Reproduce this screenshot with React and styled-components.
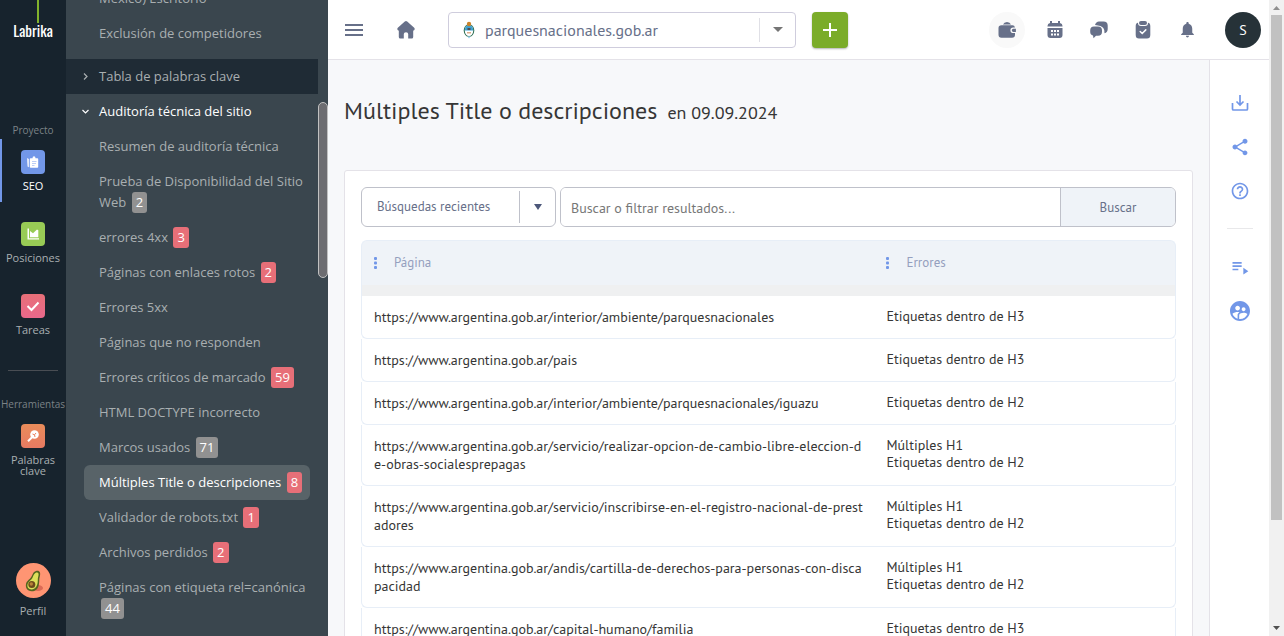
import React from 'react'
import styled, { createGlobalStyle } from 'styled-components'
import {
  MdHelpOutline,
  MdNotifications,
  MdPlaylistPlay,
  MdShare,
  MdSupervisedUserCircle,
} from 'react-icons/md'

const theme = {
  colors: {
    rail: '#17232d',
    sidebar: '#3a464e',
    sidebarDark: '#1f2b35',
    muted: '#a9afb1',
    slate: '#677089',
    blue: '#7297e8',
    red: '#e76f78',
    grey: '#919191',
    line: '#e4e2e8',
    rowLine: '#e7eef7',
    pale: '#eff3f8',
    text: '#363636',
  },
  fonts: {
    side: '"Open Sans", sans-serif',
    main: '"PT Sans", "Noto Sans", sans-serif',
    logo: 'Oswald, "Liberation Sans Narrow", "Liberation Sans", sans-serif',
  },
}

const GlobalStyle = createGlobalStyle`
  *, *:before { box-sizing: border-box; }
  body {
    margin: 0;
    color: ${theme.colors.text};
    font-family: ${theme.fonts.main};
    font-size: 14px;
  }
  a { color: inherit; text-decoration: none; }
  button, input, select { font: inherit; color: inherit; }
`

const Page = styled.div`
  display: grid;
  grid-template-columns: 66px 262px minmax(0, 1fr) 15px;
  height: 100vh;
  overflow: hidden;
`

/* Project rail */

const Rail = styled.nav`
  background: ${theme.colors.rail};
  color: ${theme.colors.muted};
  display: flex;
  flex-direction: column;
  font-family: ${theme.fonts.side};
  min-height: 0;
  padding-bottom: 20px;
`

const Logo = styled.a`
  align-items: center;
  color: #fff;
  display: flex;
  flex-direction: column;
  font-family: ${theme.fonts.logo};
  font-size: 15px;
  height: 122px;
  line-height: 14px;
  &:before {
    background: #82b32c;
    content: '';
    height: 23px;
    margin-left: 10px;
    width: 2px;
  }
`

const RailHeading = styled.div`
  color: #7b8286;
  font-size: 10px;
  line-height: 16px;
  margin-bottom: 1px;
  text-align: center;
`

const RailLink = styled.a`
  align-items: center;
  border-left: 2px solid ${props => props.$active ? theme.colors.blue : 'transparent'};
  color: ${props => props.$active ? '#fff' : 'inherit'};
  display: flex;
  flex-direction: column;
  font-size: 11px;
  gap: 6px;
  line-height: 11px;
  margin-bottom: 9px;
  padding: 11px 2px 11px 0;
  text-align: center;
`

const Tile = styled.span`
  align-items: center;
  background: ${props => props.$fill};
  border-radius: 4px;
  display: flex;
  height: 24px;
  justify-content: center;
  width: 24px;
`

const RailDivider = styled.hr`
  border: 0;
  border-top: 1px solid #494d53;
  margin: 15px 8px 25px;
  width: 50px;
`

const Profile = styled.a`
  align-items: center;
  display: flex;
  flex-direction: column;
  font-size: 11px;
  gap: 7px;
  line-height: 11px;
  margin-top: auto;
`

/* Section sidebar */

const Sidebar = styled.aside`
  background: ${theme.colors.sidebar};
  color: ${theme.colors.muted};
  display: grid;
  font-family: ${theme.fonts.side};
  font-size: 13px;
  grid-template-columns: minmax(0, 1fr) 10px;
  line-height: 21px;
  min-height: 0;
  overflow: hidden;
`

const SideList = styled.ul`
  list-style: none;
  margin: -19px 0 0;
  padding: 0;
`

const SideLink = styled.a`
  background: ${props => props.$active ? '#586368' : 'none'};
  border-radius: 6px;
  color: ${props => props.$active ? '#fff' : 'inherit'};
  display: block;
  margin: 0 8px 0 18px;
  padding: 7px 0 7px 15px;
  &:hover { color: #fff; }
`

const Group = styled.button`
  align-items: center;
  background: ${props => props.$open ? 'none' : theme.colors.sidebarDark};
  border: 0;
  color: ${props => props.$open ? '#fff' : 'inherit'};
  display: flex;
  gap: 9px;
  line-height: 21px;
  margin-top: ${props => props.$open ? '0' : '8px'};
  padding: 7px 15px;
  text-align: left;
  width: 100%;
`

const Badge = styled.span`
  background: ${props => props.$warn ? theme.colors.red : theme.colors.grey};
  border-radius: 3px;
  color: #fff;
  display: inline-block;
  margin-left: 2px;
  padding: 0 4px;
`

const SideScroll = styled.div`
  background: ${theme.colors.sidebar};
  padding-top: 102px;
  &:before {
    background: #6d6d71;
    border: 1px solid #c1c1c1;
    border-radius: 5px;
    content: '';
    display: block;
    height: 176px;
  }
`

/* Top bar */

const Main = styled.div`
  display: flex;
  flex-direction: column;
  min-height: 0;
  min-width: 0;
`

const TopBar = styled.header`
  align-items: center;
  background: #fff;
  border-bottom: 1px solid ${theme.colors.line};
  color: ${theme.colors.slate};
  display: flex;
  flex: none;
  height: 60px;
  padding: 0 8px;
`

const IconButton = styled.button`
  align-items: center;
  background: none;
  border: 0;
  color: inherit;
  display: flex;
  height: 36px;
  justify-content: center;
  padding: 0;
  width: ${props => props.$width || 44}px;
`

const WalletButton = styled(IconButton)`
  background: #f9f9f9;
  border-radius: 50%;
  margin: 0 8px 0 auto;
`

const DomainBox = styled.label`
  align-items: center;
  border: 1px solid #cfcddd;
  border-radius: 4px;
  display: flex;
  font-size: 16px;
  gap: 10px;
  height: 36px;
  margin: 0 16px 0 8px;
  padding-left: 14px;
  width: 348px;
`

const BareSelect = styled.select`
  appearance: none;
  background: none;
  border: 0;
  flex: 1;
  line-height: 24px;
  min-width: 0;
  outline: 0;
  padding: 0;
`

const Caret = styled.span`
  align-items: center;
  border-left: 1px solid ${props => props.$line};
  display: flex;
  height: ${props => props.$height}px;
  justify-content: center;
  width: 36px;
`

const AddButton = styled.button`
  align-items: center;
  background: #7bac29;
  border: 0;
  border-radius: 4px;
  box-shadow: 0 1px 2px rgba(0, 0, 0, 0.3);
  display: flex;
  height: 36px;
  justify-content: center;
  padding: 0;
  width: 36px;
`

const Avatar = styled.button`
  background: #263238;
  border: 0;
  border-radius: 50%;
  color: #fff;
  height: 36px;
  margin-left: 16px;
  padding: 0;
  width: 36px;
`

/* Content */

const Body = styled.div`
  display: grid;
  flex: 1;
  grid-template-columns: minmax(0, 1fr) 60px;
  min-height: 0;
`

const Content = styled.main`
  background: #f7f8fa;
  overflow: hidden;
  padding: 35px 16px 0;
`

const Title = styled.h1`
  font-size: 24px;
  font-weight: normal;
  line-height: 32px;
  margin: 0 0 43px;
  small {
    font-size: 18px;
    line-height: 18px;
    margin-left: 10px;
  }
`

const Panel = styled.section`
  background: #fff;
  border: 1px solid ${theme.colors.line};
  border-radius: 3px;
  padding: 16px;
`

const SearchRow = styled.form`
  color: ${theme.colors.slate};
  display: flex;
  font-size: 13px;
  gap: 4px;
  margin-bottom: 13px;
`

const RecentBox = styled.label`
  align-items: center;
  border: 1px solid #bfc1ca;
  border-radius: 6px;
  display: flex;
  height: 40px;
  padding-left: 15px;
  width: 195px;
`

const SearchBox = styled.div`
  border: 1px solid #bfc1ca;
  border-radius: 6px;
  display: flex;
  flex: 1;
  height: 40px;
  overflow: hidden;
  input {
    border: 0;
    flex: 1;
    font-size: 14px;
    min-width: 0;
    outline: 0;
    padding: 2px 10px 0;
  }
  input::placeholder { color: #777; }
  button {
    background: ${theme.colors.pale};
    border: 0;
    border-left: 1px solid #bfc1ca;
    width: 115px;
  }
`

const Table = styled.table`
  border-collapse: separate;
  border-spacing: 0;
  table-layout: fixed;
  width: 100%;
`

const HeadCell = styled.th`
  background: ${theme.colors.pale};
  border: 1px solid ${theme.colors.rowLine};
  border-width: 1px 0 0;
  box-shadow: inset 0 -11px #eff0f1;
  color: #959fbe;
  font-size: 13px;
  font-weight: normal;
  height: 56px;
  padding: 0 12px 12px;
  text-align: left;
  &:first-child {
    border-left-width: 1px;
    border-top-left-radius: 6px;
    width: 63%;
  }
  &:last-child {
    border-right-width: 1px;
    border-top-right-radius: 6px;
  }
`

const HeadLabel = styled.div`
  align-items: center;
  display: flex;
  gap: 17px;
`

const Cell = styled.td`
  border: 0 solid ${theme.colors.rowLine};
  border-bottom-width: 1px;
  line-height: 17px;
  padding: 12px;
  vertical-align: top;
  &:first-child {
    border-bottom-left-radius: 6px;
    border-left-width: 1px;
    line-height: 18px;
    padding-right: 10px;
    word-break: break-all;
  }
  &:last-child {
    border-bottom-right-radius: 6px;
    border-right-width: 1px;
  }
`

const Tools = styled.aside`
  align-items: center;
  background: #fff;
  border-left: 1px solid ${theme.colors.line};
  color: ${theme.colors.blue};
  display: flex;
  flex-direction: column;
  gap: 8px;
  padding-top: 25px;
  hr {
    border: 0;
    border-top: 1px solid #e8e8ea;
    margin: 11px 0 12px;
    width: 26px;
  }
`

const PageScroll = styled.div`
  align-items: center;
  background: #f1f1f1;
  display: flex;
  flex-direction: column;
  justify-content: space-between;
  padding: 6px 0;
`

const PageThumb = styled.div`
  background: #c1c1c1;
  flex: 0 0 auto;
  height: 81%;
  margin: 5px 0 auto;
  width: 11px;
`

/* Drawings */

const Icon = ({ size = 20, children }) => (
  <svg width={size} height={size} viewBox="0 0 20 20" fill="currentColor" aria-hidden="true">
    {children}
  </svg>
)

const Triangle = ({ width, height, fill, up }) => (
  <svg width={width} height={height} viewBox="0 0 10 6" preserveAspectRatio="none" aria-hidden="true">
    <path d={up ? 'M0 6h10L5 0z' : 'M0 0h10L5 6z'} fill={fill} />
  </svg>
)

const MenuIcon = () => (
  <Icon><path d="M1 4h18v2H1zM1 9h18v2H1zM1 14h18v2H1z" /></Icon>
)

const HomeIcon = () => (
  <Icon>
    <path d="M8.800 1.500Q10 .4 11.200 1.500l7 6.200q.9.900.3 2l-.6.900h-.7V17q0 1.500-1.500 1.500h-3.500V14q0-1.700-2.200-1.700T7.800 14v4.500H4.300Q2.800 18.500 2.800 17v-6.400h-.7l-.6-.9q-.6-1.100.3-2z" />
  </Icon>
)

const WalletIcon = () => (
  <Icon>
    <path d="M6 4.500Q7 2 10 2t4 2.500zM4.500 5.200h11q2 0 2.500 2.300h-1.800a2.800 2.800 0 0 0 0 5.600H18v1.700q0 3-3 3H4.500q-3 0-3-3V8q0-2.800 3-2.800z" />
    <path d="M16.400 8.700h2.500v3.200h-2.500a1.600 1.600 0 0 1 0-3.200z" />
  </Icon>
)

const CalendarIcon = () => (
  <Icon>
    <path d="M5 1h2v2h6V1h2v2q2.500.3 2.500 3v.5h-15V6Q2.500 3.300 5 3zM2.500 8h15v7q0 3-3 3h-9q-3 0-3-3z" />
    <path d="M6 10h2v2H6zM9 10h2v2H9zM12 10h2v2h-2zM6 13.500h2v2H6zM9 13.500h2v2H9zM12 13.500h2v2h-2z" fill="#fff" />
  </Icon>
)

const ChatIcon = () => (
  <Icon>
    <path d="M6 5Q7 1.500 10 1.500h4.500q4.200 0 4.200 4V9q0 3.500-3.200 4.200.4-3.200-1.200-5.200Q12.500 5.500 6 5z" />
    <path d="M5 6.500h4q4 0 4 4v1.200q0 4-4 4H7l-2.500 2.600L4 15.500q-2.800-.6-2.800-3.800v-1.200q0-4 3.800-4z" />
  </Icon>
)

const ClipboardIcon = () => (
  <Icon>
    <path d="M8 1h4q2 0 2 2t-2 2H8Q6 5 6 3t2-2z" />
    <path d="M5 2.800Q5 6 8 6h4q3 0 3-3.200 2.300.2 2.300 3.200v9q0 3.500-3.300 3.500H6q-3.300 0-3.300-3.500V6q0-3 2.300-3.200z" />
    <path d="M7.200 11.500l2 2 3.600-3.600" fill="none" stroke="#fff" strokeWidth="1.500" strokeLinecap="round" />
  </Icon>
)

const DownloadIcon = () => (
  <Icon>
    <path d="M10 2v9.500M6.500 8.500 10 12l3.500-3.500M2.500 10v6q0 1 1 1h13q1 0 1-1v-6" fill="none" stroke="currentColor" strokeWidth="1.700" />
  </Icon>
)

const DotsIcon = () => (
  <svg width="3" height="12" viewBox="0 0 3 12" fill={theme.colors.blue} aria-hidden="true">
    <rect width="3" height="3" rx="1" />
    <rect y="4.500" width="3" height="3" rx="1" />
    <rect y="9" width="3" height="3" rx="1" />
  </svg>
)

const Chevron = ({ open }) => (
  <svg width="9" height="9" viewBox="0 0 9 9" fill="none" stroke="currentColor" strokeWidth="1.200" aria-hidden="true">
    <path d={open ? 'M1.500 3l3 3 3-3' : 'M3 1.500l3 3-3 3'} />
  </svg>
)

const SeoIcon = () => (
  <svg width="14" height="14" viewBox="0 0 14 14" fill="#fff" aria-hidden="true">
    <path d="M1.200 3l1.600 1v8.300l-1.200-.8q-.4-4-.4-8.500z" />
    <path d="M4.600 3.200h1.900Q6.500 1.200 8 1.200t1.500 2h1.900q.8 0 .8.8v7.900q0 .8-.8.800H4.600q-.8 0-.8-.8V4q0-.8.8-.8z" />
    <path d="M6 6.500h4.500M6 8.500h4M6 10.500h2.500" stroke="#a9c0f2" strokeWidth=".8" />
  </svg>
)

const ChartIcon = () => (
  <svg width="14" height="14" viewBox="0 0 14 14" fill="#fff" aria-hidden="true">
    <path d="M1.500 1.500H3v9.800h10v1.200H1.500z" />
    <path d="M4 4l3 2.300L11 2.500l1.300.8v7H4z" />
  </svg>
)

const CheckIcon = () => (
  <svg width="14" height="14" viewBox="0 0 14 14" fill="none" stroke="#fff" strokeWidth="2" aria-hidden="true">
    <path d="M1.500 7l4 4 7-7.500" />
  </svg>
)

const KeyIcon = () => (
  <svg width="14" height="14" viewBox="0 0 14 14" aria-hidden="true">
    <path d="M2 12.300l4-4" stroke="#fff" strokeWidth="2" />
    <circle cx="8.500" cy="5.500" r="4.300" fill="#fff" />
    <path d="M6.500 5l2 .8L10 4M8.500 5.800L9 8" fill="none" stroke="#e97f5e" />
  </svg>
)

const Crest = () => (
  <svg width="12" height="18" viewBox="0 0 12 18" aria-hidden="true">
    <ellipse cx="6" cy="9.500" rx="5.300" ry="6.300" fill="#2f6f55" />
    <ellipse cx="6" cy="9.500" rx="4.200" ry="5.600" fill="#fff" />
    <path d="M1.800 9.500a4.200 5.600 0 0 1 8.400 0z" fill="#3f9fd0" />
    <circle cx="6" cy="3" r="2.200" fill="#c9822a" />
    <path d="M4.500 7h3v2h-3z" fill="#4d4b4f" />
    <path d="M4 11h4v1.500H4z" fill="#dcab8a" />
    <path d="M4.500 15.500h3L6 17.500z" fill="#8cc8e8" />
  </svg>
)

const Avocado = () => (
  <svg width="35" height="35" viewBox="0 0 35 35" aria-hidden="true">
    <circle cx="17.500" cy="17.500" r="17.500" fill="#ff9573" />
    <ellipse cx="22" cy="25" rx="5" ry="3" fill="#dc6b56" />
    <path d="M20 8c3.500-1 5 1.500 3.800 5.500-.9 3-.2 5-1 8.500-1 4.500-4 6.500-7.300 6.300-4-.3-6.300-3.300-5.500-7.300.7-3.500 4-4.500 5.500-7.500C17 10.500 17.500 8.500 20 8z" fill="#55651f" />
    <path d="M20.300 9.500c2-.4 2.800 1 2 3.800-.9 3-.1 5-1 8-1 3.500-3.200 5.400-5.800 5.200-2.900-.2-4.500-2.300-4-5 .7-3 4-4.200 5.300-7.500.8-2 1.700-4 3.500-4.500z" fill="#dde05a" />
    <circle cx="15.800" cy="21.500" r="3.500" fill="#6e4a1c" />
    <circle cx="15.300" cy="21" r="1.700" fill="#b88339" />
  </svg>
)

const auditLinks = [
  { label: 'Resumen de auditoría técnica' },
  { label: 'Prueba de Disponibilidad del Sitio Web', count: 2 },
  { label: 'errores 4xx', count: 3, warn: true },
  { label: 'Páginas con enlaces rotos', count: 2, warn: true },
  { label: 'Errores 5xx' },
  { label: 'Páginas que no responden' },
  { label: 'Errores críticos de marcado', count: 59, warn: true },
  { label: 'HTML DOCTYPE incorrecto' },
  { label: 'Marcos usados', count: 71 },
  { label: 'Múltiples Title o descripciones', count: 8, warn: true, active: true },
  { label: 'Validador de robots.txt', count: 1, warn: true },
  { label: 'Archivos perdidos', count: 2, warn: true },
  { label: 'Páginas con etiqueta rel=canónica', count: 44 },
]

const site = 'https://www.argentina.gob.ar'

const rows = [
  { path: '/interior/ambiente/parquesnacionales', errors: ['Etiquetas dentro de H3'] },
  { path: '/pais', errors: ['Etiquetas dentro de H3'] },
  { path: '/interior/ambiente/parquesnacionales/iguazu', errors: ['Etiquetas dentro de H2'] },
  { path: '/servicio/realizar-opcion-de-cambio-libre-eleccion-de-obras-socialesprepagas', errors: ['Múltiples H1', 'Etiquetas dentro de H2'] },
  { path: '/servicio/inscribirse-en-el-registro-nacional-de-prestadores', errors: ['Múltiples H1', 'Etiquetas dentro de H2'] },
  { path: '/andis/cartilla-de-derechos-para-personas-con-discapacidad', errors: ['Múltiples H1', 'Etiquetas dentro de H2'] },
  { path: '/capital-humano/familia', errors: ['Etiquetas dentro de H3'] },
]

const ProjectRail = () => (
  <Rail>
    <Logo href="#">Labrika</Logo>
    <RailHeading>Proyecto</RailHeading>
    <RailLink href="#seo" $active>
      <Tile $fill="#7297e8"><SeoIcon /></Tile>
      SEO
    </RailLink>
    <RailLink href="#posiciones">
      <Tile $fill="#98cb55"><ChartIcon /></Tile>
      Posiciones
    </RailLink>
    <RailLink href="#tareas">
      <Tile $fill="linear-gradient(#e76f78, #e9688b)"><CheckIcon /></Tile>
      Tareas
    </RailLink>
    <RailDivider />
    <RailHeading>Herramientas</RailHeading>
    <RailLink href="#palabras">
      <Tile $fill="linear-gradient(#e98c5a, #e77a62)"><KeyIcon /></Tile>
      Palabras clave
    </RailLink>
    <Profile href="#perfil">
      <Avocado />
      Perfil
    </Profile>
  </Rail>
)

const SectionSidebar = () => (
  <Sidebar>
    <SideList>
      <li><SideLink href="#">México) Escritorio</SideLink></li>
      <li><SideLink href="#">Exclusión de competidores</SideLink></li>
      <li><Group type="button"><Chevron />Tabla de palabras clave</Group></li>
      <li><Group type="button" $open><Chevron open />Auditoría técnica del sitio</Group></li>
      {auditLinks.map(link => (
        <li key={link.label}>
          <SideLink href="#" $active={link.active}>
            {link.label}
            {link.count && <>{' '}<Badge $warn={link.warn}>{link.count}</Badge></>}
          </SideLink>
        </li>
      ))}
    </SideList>
    <SideScroll />
  </Sidebar>
)

const Header = () => (
  <TopBar>
    <IconButton $width={36} aria-label="Menú"><MenuIcon /></IconButton>
    <IconButton $width={68} aria-label="Inicio"><HomeIcon /></IconButton>
    <DomainBox>
      <Crest />
      <BareSelect aria-label="Proyecto" defaultValue="parques">
        <option value="parques">parquesnacionales.gob.ar</option>
      </BareSelect>
      <Caret $line="#e0e0e6" $height={24}><Triangle width={10} height={5} fill="#757575" /></Caret>
    </DomainBox>
    <AddButton aria-label="Añadir">
      <svg width="14" height="14" viewBox="0 0 14 14" aria-hidden="true">
        <path d="M6 0h2v6h6v2H8v6H6V8H0V6h6z" fill="#fff" />
      </svg>
    </AddButton>
    <WalletButton $width={36} aria-label="Saldo"><WalletIcon /></WalletButton>
    <IconButton aria-label="Calendario"><CalendarIcon /></IconButton>
    <IconButton aria-label="Mensajes"><ChatIcon /></IconButton>
    <IconButton aria-label="Tareas"><ClipboardIcon /></IconButton>
    <IconButton aria-label="Avisos"><MdNotifications size={19} /></IconButton>
    <Avatar>S</Avatar>
  </TopBar>
)

const ResultsTable = () => (
  <Table>
    <thead>
      <tr>
        <HeadCell><HeadLabel><DotsIcon />Página</HeadLabel></HeadCell>
        <HeadCell><HeadLabel><DotsIcon />Errores</HeadLabel></HeadCell>
      </tr>
    </thead>
    <tbody>
      {rows.map(row => (
        <tr key={row.path}>
          <Cell><a href={site + row.path}>{site + row.path}</a></Cell>
          <Cell>{row.errors.map(error => <div key={error}>{error}</div>)}</Cell>
        </tr>
      ))}
    </tbody>
  </Table>
)

export default function App() {
  return (
    <>
      <GlobalStyle />
      <Page>
        <ProjectRail />
        <SectionSidebar />
        <Main>
          <Header />
          <Body>
            <Content>
              <Title>Múltiples Title o descripciones<small>en 09.09.2024</small></Title>
              <Panel>
                <SearchRow>
                  <RecentBox>
                    <BareSelect aria-label="Historial" defaultValue="recientes">
                      <option value="recientes">Búsquedas recientes</option>
                    </BareSelect>
                    <Caret $line="#bfc1ca" $height={32}><Triangle width={8} height={6} fill="#4d587a" /></Caret>
                  </RecentBox>
                  <SearchBox>
                    <input type="text" aria-label="Buscar" placeholder="Buscar o filtrar resultados..." />
                    <button type="button">Buscar</button>
                  </SearchBox>
                </SearchRow>
                <ResultsTable />
              </Panel>
            </Content>
            <Tools>
              <IconButton aria-label="Descargar"><DownloadIcon /></IconButton>
              <IconButton aria-label="Compartir"><MdShare size={20} /></IconButton>
              <IconButton aria-label="Ayuda"><MdHelpOutline size={20} /></IconButton>
              <hr />
              <IconButton aria-label="Lista"><MdPlaylistPlay size={20} /></IconButton>
              <IconButton aria-label="Usuarios"><MdSupervisedUserCircle size={24} /></IconButton>
            </Tools>
          </Body>
        </Main>
        <PageScroll aria-hidden="true">
          <Triangle width={7} height={4} fill="#8f8f8f" up />
          <PageThumb />
          <Triangle width={7} height={4} fill="#505050" />
        </PageScroll>
      </Page>
    </>
  )
}
